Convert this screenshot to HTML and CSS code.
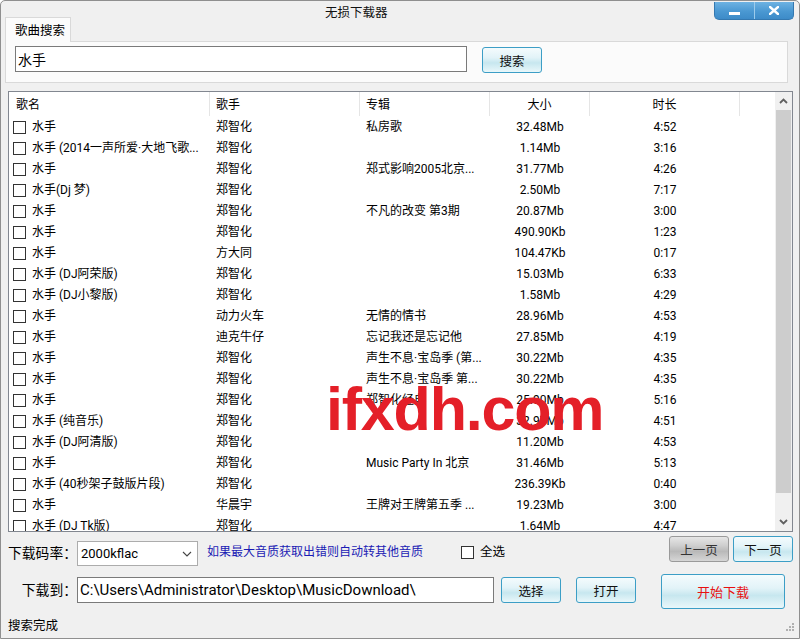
FILE: index.html
```html
<!DOCTYPE html>
<html lang="zh-CN">
<head>
<meta charset="utf-8">
<title>无损下载器</title>
<link rel="stylesheet" href="styles.css">
</head>
<body>
<div class="window">
  <div class="titlebar">
    <span class="title">无损下载器</span>
    <div class="winbtns">
      <span class="wb"><svg width="11" height="3" viewBox="0 0 11 3"><rect x="0" y="0" width="11" height="3" fill="#fff"/></svg></span>
      <span class="wb"><svg width="10" height="9" viewBox="0 0 10 9"><path d="M1 1 L9 8 M9 1 L1 8" stroke="#fff" stroke-width="2.4" stroke-linecap="square"/></svg></span>
    </div>
  </div>
  <div class="tabs"><div class="tab">歌曲搜索</div></div>
  <div class="panel">
    <div class="searchbox">水手</div>
    <div class="btn btn-search">搜索</div>
  </div>

  <div class="list">
    <div class="list-main">
      <div class="hdr">
        <div class="h c1">歌名</div><div class="h c2">歌手</div><div class="h c3">专辑</div><div class="h c4">大小</div><div class="h c5">时长</div><div class="h c6"></div>
      </div>
      <div class="rows">
        <div class="row"><div class="c c1"><span class="cb"></span>水手</div><div class="c c2">郑智化</div><div class="c c3">私房歌</div><div class="c c4">32.48Mb</div><div class="c c5">4:52</div></div>
        <div class="row"><div class="c c1"><span class="cb"></span>水手 (2014一声所爱·大地飞歌...</div><div class="c c2">郑智化</div><div class="c c3"></div><div class="c c4">1.14Mb</div><div class="c c5">3:16</div></div>
        <div class="row"><div class="c c1"><span class="cb"></span>水手</div><div class="c c2">郑智化</div><div class="c c3">郑式影响2005北京...</div><div class="c c4">31.77Mb</div><div class="c c5">4:26</div></div>
        <div class="row"><div class="c c1"><span class="cb"></span>水手(Dj 梦)</div><div class="c c2">郑智化</div><div class="c c3"></div><div class="c c4">2.50Mb</div><div class="c c5">7:17</div></div>
        <div class="row"><div class="c c1"><span class="cb"></span>水手</div><div class="c c2">郑智化</div><div class="c c3">不凡的改变 第3期</div><div class="c c4">20.87Mb</div><div class="c c5">3:00</div></div>
        <div class="row"><div class="c c1"><span class="cb"></span>水手</div><div class="c c2">郑智化</div><div class="c c3"></div><div class="c c4">490.90Kb</div><div class="c c5">1:23</div></div>
        <div class="row"><div class="c c1"><span class="cb"></span>水手</div><div class="c c2">方大同</div><div class="c c3"></div><div class="c c4">104.47Kb</div><div class="c c5">0:17</div></div>
        <div class="row"><div class="c c1"><span class="cb"></span>水手 (DJ阿荣版)</div><div class="c c2">郑智化</div><div class="c c3"></div><div class="c c4">15.03Mb</div><div class="c c5">6:33</div></div>
        <div class="row"><div class="c c1"><span class="cb"></span>水手 (DJ小黎版)</div><div class="c c2">郑智化</div><div class="c c3"></div><div class="c c4">1.58Mb</div><div class="c c5">4:29</div></div>
        <div class="row"><div class="c c1"><span class="cb"></span>水手</div><div class="c c2">动力火车</div><div class="c c3">无情的情书</div><div class="c c4">28.96Mb</div><div class="c c5">4:53</div></div>
        <div class="row"><div class="c c1"><span class="cb"></span>水手</div><div class="c c2">迪克牛仔</div><div class="c c3">忘记我还是忘记他</div><div class="c c4">27.85Mb</div><div class="c c5">4:19</div></div>
        <div class="row"><div class="c c1"><span class="cb"></span>水手</div><div class="c c2">郑智化</div><div class="c c3">声生不息·宝岛季 (第...</div><div class="c c4">30.22Mb</div><div class="c c5">4:35</div></div>
        <div class="row"><div class="c c1"><span class="cb"></span>水手</div><div class="c c2">郑智化</div><div class="c c3">声生不息·宝岛季 第...</div><div class="c c4">30.22Mb</div><div class="c c5">4:35</div></div>
        <div class="row"><div class="c c1"><span class="cb"></span>水手</div><div class="c c2">郑智化</div><div class="c c3">郑智化经典</div><div class="c c4">25.90Mb</div><div class="c c5">5:16</div></div>
        <div class="row"><div class="c c1"><span class="cb"></span>水手 (纯音乐)</div><div class="c c2">郑智化</div><div class="c c3"></div><div class="c c4">32.97Mb</div><div class="c c5">4:51</div></div>
        <div class="row"><div class="c c1"><span class="cb"></span>水手 (DJ阿清版)</div><div class="c c2">郑智化</div><div class="c c3"></div><div class="c c4">11.20Mb</div><div class="c c5">4:53</div></div>
        <div class="row"><div class="c c1"><span class="cb"></span>水手</div><div class="c c2">郑智化</div><div class="c c3">Music Party In 北京</div><div class="c c4">31.46Mb</div><div class="c c5">5:13</div></div>
        <div class="row"><div class="c c1"><span class="cb"></span>水手 (40秒架子鼓版片段)</div><div class="c c2">郑智化</div><div class="c c3"></div><div class="c c4">236.39Kb</div><div class="c c5">0:40</div></div>
        <div class="row"><div class="c c1"><span class="cb"></span>水手</div><div class="c c2">华晨宇</div><div class="c c3">王牌对王牌第五季 ...</div><div class="c c4">19.23Mb</div><div class="c c5">3:00</div></div>
        <div class="row"><div class="c c1"><span class="cb"></span>水手 (DJ Tk版)</div><div class="c c2">郑智化</div><div class="c c3"></div><div class="c c4">1.64Mb</div><div class="c c5">4:47</div></div>
      </div>
    </div>
    <div class="sb">
      <div class="sb-btn"><svg width="9" height="6" viewBox="0 0 9 6"><path d="M1 5 L4.5 1.5 L8 5" fill="none" stroke="#606060" stroke-width="1.8"/></svg></div>
      <div class="sb-track"><div class="sb-thumb"></div></div>
      <div class="sb-btn"><svg width="9" height="6" viewBox="0 0 9 6"><path d="M1 1 L4.5 4.5 L8 1" fill="none" stroke="#606060" stroke-width="1.8"/></svg></div>
    </div>
  </div>

  <div class="bottom">
    <div class="brow brow1">
      <span class="lbl lbl1">下载码率：</span>
      <div class="select"><span>2000kflac</span><svg width="10" height="6" viewBox="0 0 10 6"><path d="M1 1 L5 5 L9 1" fill="none" stroke="#444" stroke-width="1.1"/></svg></div>
      <span class="hint">如果最大音质获取出错则自动转其他音质</span>
      <span class="cb cb-all"></span>
      <span class="all">全选</span>
      <span class="spacer"></span>
      <div class="btn btn-gray btn-page">上一页</div>
      <div class="btn btn-page btn-next">下一页</div>
    </div>
    <div class="brow brow2">
      <span class="lbl lbl2">下载到：</span>
      <div class="pathbox">C:\Users\Administrator\Desktop\MusicDownload\</div>
      <div class="btn btn-sel">选择</div>
      <div class="btn btn-open">打开</div>
      <div class="btn btn-start">开始下载</div>
    </div>
    <div class="status">搜索完成</div>
  </div>

  <div class="watermark">ifxdh.com</div>
  <svg class="grip" width="10" height="10" viewBox="0 0 10 10">
    <rect x="7" y="1" width="2" height="2" fill="#b0b0b0"/>
    <rect x="4" y="4" width="2" height="2" fill="#b0b0b0"/><rect x="7" y="4" width="2" height="2" fill="#b0b0b0"/>
    <rect x="1" y="7" width="2" height="2" fill="#b0b0b0"/><rect x="4" y="7" width="2" height="2" fill="#b0b0b0"/><rect x="7" y="7" width="2" height="2" fill="#b0b0b0"/>
  </svg>
</div>
</body>
</html>
```
FILE: styles.css
```css
* { box-sizing: border-box; }
html, body { margin: 0; padding: 0; }
body {
  width: 800px; height: 639px; overflow: hidden; background: #ffffff;
  font-family: Roboto, "Noto Sans CJK SC", sans-serif; font-size: 12px; color: #000;
}
.window {
  position: relative; width: 800px; height: 639px; background: #f0f0f0;
  border: 1px solid #8f8f8f; border-radius: 5px 5px 0 0;
  display: flex; flex-direction: column;
}
.titlebar { height: 16px; display: flex; align-items: flex-start; }
.title { margin-left: 324px; margin-top: 4px; line-height: 16px; font-size: 12.5px; color: #111; }
.winbtns {
  margin-left: auto; margin-right: 5px; margin-top: 1px; height: 18px; display: flex;
  border: 1px solid #3478b0; border-top: none; border-radius: 0 0 5px 5px; overflow: hidden;
  background: linear-gradient(#6db2e2, #4a98d2 55%, #3d8bc8);
  position: relative; z-index: 2;
}
.wb { width: 39px; display: flex; align-items: center; justify-content: center; }
.wb:first-child svg { margin-top: 6px; }
.wb + .wb { border-left: 1px solid #9ccbeb; }

.tabs { height: 24px; display: flex; align-items: flex-end; }
.tab {
  margin-left: 4px; width: 66px; height: 25px; margin-bottom: -1px; position: relative; z-index: 1;
  border: 1px solid #d9d9d9; border-bottom: none; background: #fbfbfb;
  padding-left: 9px; padding-top: 1px; line-height: 23px; font-size: 12.5px;
}
.panel {
  margin: 0 11px 0 4px; height: 42px; border: 1px solid #d9d9d9; background: #fbfbfb;
  display: flex; align-items: flex-start; padding: 4px 0 0 9px;
}
.searchbox {
  width: 452px; height: 26px; border: 1px solid #7a7a7a; background: #fff;
  padding-left: 2px; padding-top: 2px; font-size: 14px; line-height: 22px;
}
.btn {
  width: 60px; height: 26px; border: 1px solid #3c9ec6; border-radius: 3px;
  background: linear-gradient(#f4fbfd 0%, #e2f3f8 40%, #c7e7ef 62%, #e9f7fa 100%);
  display: flex; align-items: center; justify-content: center; font-size: 12.5px; color: #111;
}
.btn-search { margin-left: 15px; margin-top: 1px; }

.list {
  margin: 8px 0 0 7px; width: 785px; height: 441px; border: 1px solid #828790; background: #fff;
  display: flex; overflow: hidden;
}
.list-main { flex: 1; display: flex; flex-direction: column; overflow: hidden; }
.hdr { height: 24px; display: flex; flex: none; }
.h { line-height: 22px; padding-top: 2px; border-right: 1px solid #e5e5e5; padding-left: 6px; }
.hdr .c1 { padding-left: 7px; }
.hdr .c4, .hdr .c5 { text-align: center; padding-left: 0; }
.hdr .c6 { flex: 1; border-right: none; }
.c1 { width: 201px; flex: none; }
.c2 { width: 150px; flex: none; }
.c3 { width: 130px; flex: none; }
.c4 { width: 100px; flex: none; }
.c5 { width: 150px; flex: none; }
.rows { flex: 1; overflow: hidden; }
.row { height: 21px; display: flex; white-space: nowrap; }
.c { overflow: hidden; padding-left: 6px; padding-top: 2px; line-height: 19px; height: 21px; }
.row .c1 { padding-left: 4px; display: flex; align-items: center; }
.row .c4, .row .c5 { text-align: center; padding-left: 0; }
.cb {
  display: inline-block; width: 13px; height: 13px; border: 1px solid #333; background: #fff;
  flex: none; margin-right: 6px;
}
.sb { width: 17px; flex: none; background: #f0f0f0; display: flex; flex-direction: column; }
.sb-btn { height: 18px; display: flex; align-items: center; justify-content: center; flex: none; }
.sb-track { flex: 1; padding: 0 1px 17px 1px; }
.sb-thumb { height: 383px; background: #cdcdcd; }

.bottom { display: flex; flex-direction: column; padding: 0 6px 0 7px; }
.brow { display: flex; align-items: flex-start; }
.brow1 { height: 38px; }
.brow2 { height: 39px; }
.lbl {
  width: 69px; text-align: right; font-size: 13.8px; line-height: 20px; margin-top: 11px;
  flex: none; white-space: nowrap;
}
.select {
  width: 121px; height: 25px; margin-top: 9px; border: 1px solid #acacac; background: #fff;
  display: flex; align-items: center; justify-content: space-between; padding: 0 5px 0 3px;
  font-size: 13px;
}
.hint { margin-left: 9px; width: 216px; font-size: 12px; line-height: 20px; margin-top: 10px; color: #1b1bb4; white-space: nowrap; }
.cb-all { margin-left: 38px; margin-top: 14px; margin-right: 0; }
.all { margin-left: 6px; line-height: 20px; margin-top: 10px; font-size: 12.5px; }
.spacer { flex: 1; }
.btn-page { margin-top: 4px; }
.btn-next { margin-left: 4px; }
.btn-gray {
  border-color: #9a9a9a;
  background: linear-gradient(#e6e6e6 0%, #cfcfcf 35%, #b9b9b9 60%, #d6d6d6 100%);
  color: #333;
}
.pathbox {
  width: 417px; height: 26px; margin-top: 7px; border: 1px solid #7a7a7a; background: #fff;
  font-size: 15px; line-height: 22px; padding-top: 1px; padding-left: 2px; white-space: nowrap; overflow: hidden;
}
.brow2 .lbl { margin-top: 10px; }
.btn-sel { margin-left: 7px; margin-top: 7px; }
.btn-open { margin-left: 15px; margin-top: 7px; }
.btn-start { margin-left: 25px; margin-top: 4px; width: 124px; height: 35px; color: #e81010; font-size: 13px; }
.status { margin-top: 9px; line-height: 16px; font-size: 12.5px; }

.watermark {
  position: absolute; left: 325px; top: 378px; font-family: "Liberation Sans", Arial, sans-serif;
  font-weight: bold; font-size: 61px; line-height: 60px; letter-spacing: -1.2px; color: #e41f28;
}
.grip { position: absolute; right: 4px; bottom: 6px; }
```
